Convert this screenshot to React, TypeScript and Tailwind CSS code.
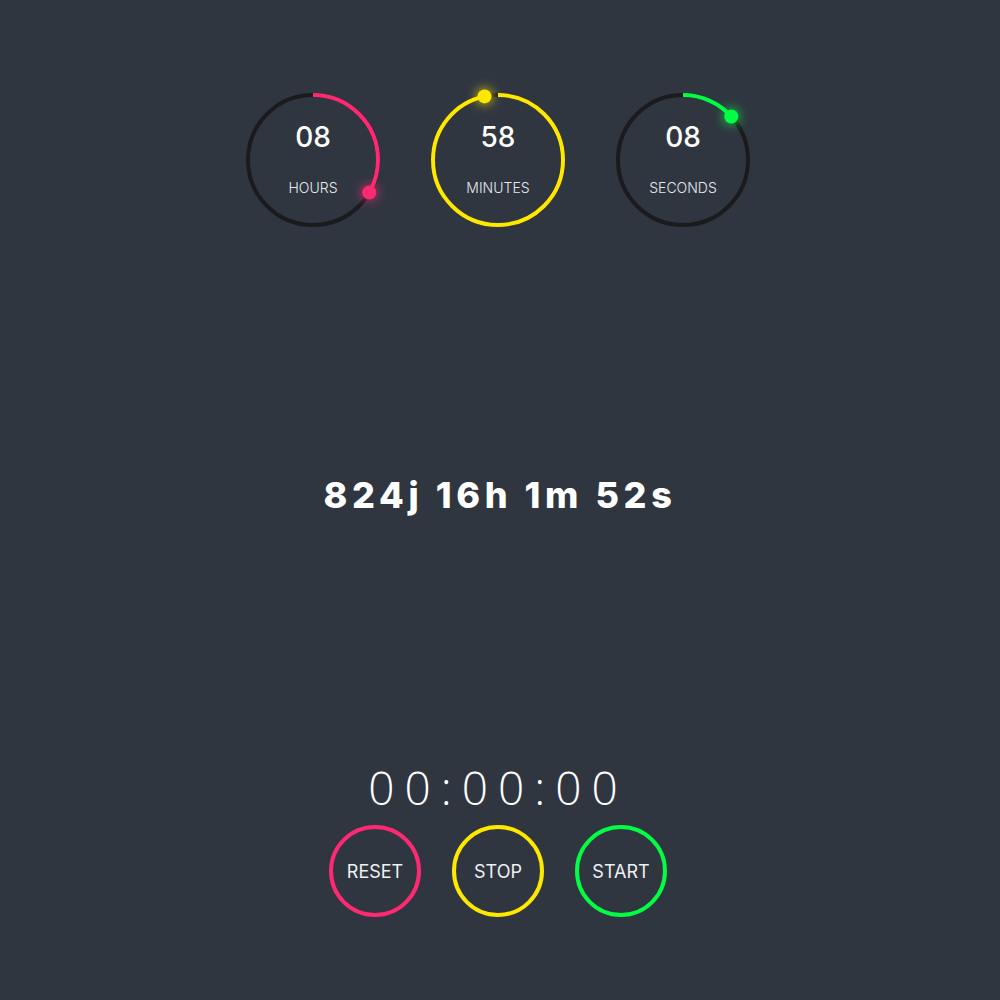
import React from 'react';

type Ring = { value: string; label: string; frac: number; color: string };

const rings: Ring[] = [
  { value: '08', label: 'HOURS', frac: 8 / 24, color: '#ff2972' },
  { value: '58', label: 'MINUTES', frac: 58 / 60, color: '#fee800' },
  { value: '08', label: 'SECONDS', frac: 8 / 60, color: '#04fc43' },
];

const R = 65;
const C = 2 * Math.PI * R;

const Dial = ({ ring }: { ring: Ring }) => {
  const a = ring.frac * 2 * Math.PI;
  const dx = 70 + R * Math.sin(a);
  const dy = 70 - R * Math.cos(a);
  return (
    <div className="relative w-[140px] h-[140px]">
      <svg width="140" height="140" viewBox="0 0 140 140" className="absolute inset-0 overflow-visible">
        <circle cx="70" cy="70" r={R} fill="none" stroke="#1b1b1d" strokeWidth="4" />
        <circle
          cx="70"
          cy="70"
          r={R}
          fill="none"
          stroke={ring.color}
          strokeWidth="4"
          strokeDasharray={`${C * ring.frac} ${C}`}
          transform="rotate(-90 70 70)"
        />
        <circle cx={dx} cy={dy} r="7" fill={ring.color} style={{ filter: `drop-shadow(0 0 6px ${ring.color})` }} />
      </svg>
      <div className="absolute inset-0 flex flex-col items-center">
        <span className="mt-[30px] text-[28px] leading-[34px] font-medium text-white">{ring.value}</span>
        <span className="mt-[25px] text-[14px] leading-[18px] text-[#e6e9ee] font-light">{ring.label}</span>
      </div>
    </div>
  );
};

const Btn = ({ label, color }: { label: string; color: string }) => (
  <button
    className="w-[92px] h-[92px] rounded-full border-4 flex items-center justify-center text-[18px] text-[#eef0f3] font-normal"
    style={{ borderColor: color }}
  >
    {label}
  </button>
);

export default function App() {
  return (
    <div className="min-h-screen bg-[#2f3640] flex flex-col items-center pr-[4px]" style={{ fontFamily: 'Inter, "Open Sans", sans-serif' }}>
      <div className="flex gap-[45px] pt-[90px]">
        {rings.map((r) => (
          <Dial key={r.label} ring={r} />
        ))}
      </div>

      <div className="mt-[243px] text-[36px] leading-[44px] font-extrabold tracking-[4.6px] pl-[4px] text-white">
        824j 16h 1m 52s
      </div>

      <div className="mt-[244px] text-[46px] leading-[52px] font-light tracking-[10px] text-white" style={{ fontFamily: '"Open Sans", sans-serif' }}>
        00:00:00
      </div>

      <div className="flex gap-[31px] mt-[12px]">
        <Btn label="RESET" color="#ff2972" />
        <Btn label="STOP" color="#fee800" />
        <Btn label="START" color="#04fc43" />
      </div>
    </div>
  );
}
